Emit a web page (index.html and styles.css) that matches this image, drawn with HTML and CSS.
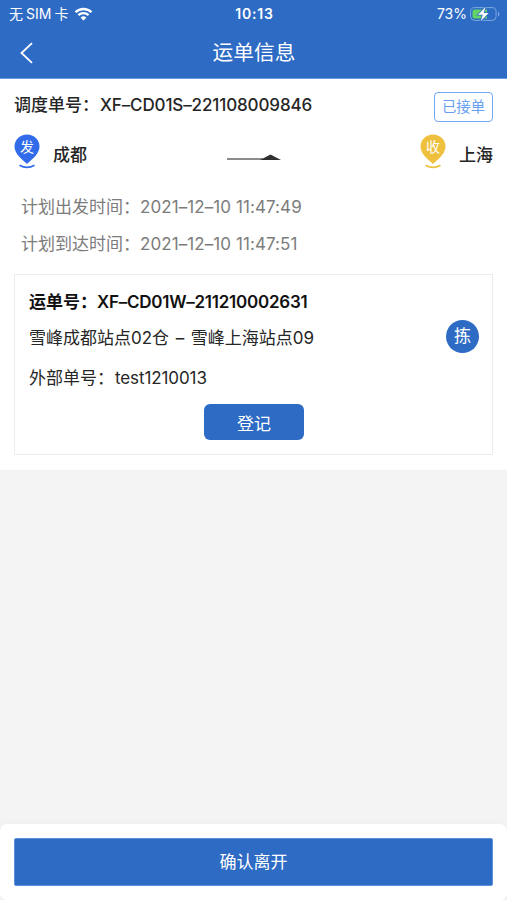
FILE: index.html
```html
<!DOCTYPE html>
<html lang="zh-CN">
<head>
  <meta charset="UTF-8">
  <meta name="viewport" content="width=device-width, initial-scale=1.0">
  <title>运单信息</title>
  <link rel="stylesheet" href="styles.css">
</head>
<body>
  <header class="header">
    <div class="status-bar">
      <div class="status-left">
        <span class="carrier">无<span class="sim">SIM</span>卡</span>
        <svg class="wifi" width="19" height="14" viewBox="0 0 19 14">
          <path d="M1.5 5.2a11.6 11.6 0 0 1 16 0M4.4 8.2a7.4 7.4 0 0 1 10.2 0" fill="none" stroke="#fff" stroke-width="2.3"/>
          <path d="M9.5 13.6 6.6 10.7a4.2 4.2 0 0 1 5.8 0z" fill="#fff"/>
        </svg>
      </div>
      <div class="status-time">10:13</div>
      <div class="status-right">
        <span>73%</span>
        <svg class="battery" width="30" height="16" viewBox="0 0 30 16">
          <rect x="0.6" y="1.6" width="25.5" height="12.8" rx="4" fill="none" stroke="#7fa8df"/>
          <path d="M4.5 3.5H17v9H4.5a2 2 0 0 1-2-2v-5a2 2 0 0 1 2-2z" fill="#65d466"/>
          <path d="M28 5.7a2.5 2.5 0 0 1 0 4.6z" fill="#7fa8df"/>
          <path d="M15.7.8 8 8.8h4.8L10.600 15.2 18.6 7h-5z" fill="#fff" stroke="#2d6bc4" stroke-width="1.6" paint-order="stroke"/>
        </svg>
      </div>
    </div>
    <div class="nav-bar">
      <svg class="back" width="14" height="22" viewBox="0 0 14 22">
        <path d="M12 1.200 1.500 11 12 20.800" fill="none" stroke="#fff" stroke-width="1.800"/>
      </svg>
      <h1 class="title">运单信息</h1>
    </div>
  </header>

  <main class="order">
    <div class="order-head">
      <div class="order-no">调度单号：<span class="code">XF–CD01S–221108009846</span></div>
      <div class="state">已接单</div>
    </div>

    <div class="route">
      <div class="place">
        <svg class="pin" width="26" height="35" viewBox="0 0 26 35">
          <path d="M13 .5C6 .5.5 5.800.5 12.500c0 7.500 8 13 12.500 17.500 4.500-4.500 12.500-10 12.500-17.500C25.500 5.800 20 .5 13 .5z" fill="#316bea"/>
          <path d="M5.500 31.300q7.500 4.200 15 0" fill="none" stroke="#316bea" stroke-width="1.600"/>
          <text class="pin-text" x="13" y="17.500">发</text>
        </svg>
        <span>成都</span>
      </div>
      <svg class="arrow" width="54" height="8" viewBox="0 0 54 8">
        <path d="M0 6h36" stroke="#666" stroke-width="1.400"/>
        <path d="M33 6.900 43.500 1.500 54 6.900z" fill="#303030"/>
      </svg>
      <div class="place">
        <svg class="pin" width="26" height="35" viewBox="0 0 26 35">
          <path d="M13 .5C6 .5.5 5.800.5 12.500c0 7.500 8 13 12.500 17.500 4.500-4.500 12.500-10 12.500-17.500C25.500 5.800 20 .5 13 .5z" fill="#eec03e"/>
          <path d="M5.500 31.300q7.500 4.200 15 0" fill="none" stroke="#eec03e" stroke-width="1.600"/>
          <text class="pin-text" x="13" y="17.500">收</text>
        </svg>
        <span>上海</span>
      </div>
    </div>

    <div class="plan">
      <p>计划出发时间：<span class="time">2021–12–10 11:47:49</span></p>
      <p>计划到达时间：<span class="time">2021–12–10 11:47:51</span></p>
    </div>

    <section class="waybill">
      <p class="waybill-no">运单号：<span class="waybill-code">XF–CD01W–211210002631</span></p>
      <div class="waybill-route">
        <span class="stations">雪峰成都站点02仓 – 雪峰上海站点09</span>
        <span class="pick">拣</span>
      </div>
      <p class="outer-no">外部单号：<span class="outer-code">test1210013</span></p>
      <button class="register" type="button">登记</button>
    </section>
  </main>

  <footer class="footer">
    <button class="confirm" type="button">确认离开</button>
  </footer>
</body>
</html>
```

FILE: styles.css
```css
* {
  box-sizing: border-box;
}

body {
  margin: 0;
  height: 100vh;
  display: flex;
  flex-direction: column;
  background-color: #f4f4f4;
  font-family: Inter, "Noto Sans CJK SC", sans-serif;
  font-size: 17px;
  color: #262626;
}

p {
  margin: 0;
}

button {
  border: none;
  padding: 0;
  color: #fff;
  background-color: #2d6bc4;
  font-family: inherit;
  font-size: 17px;
}

.header {
  height: 79px;
  color: #fff;
  background-color: #2d6bc4;
  border-bottom: 1px solid #6b9be0;
}

.status-bar {
  display: grid;
  grid-template-columns: 1fr auto 1fr;
  align-items: center;
  height: 27px;
  padding: 0 7px 0 9px;
  font-size: 14px;
}

.status-left,
.status-right {
  display: flex;
  align-items: center;
}

.carrier {
  margin-top: -2px;
}

.status-left {
  gap: 6px;
}

.status-right {
  justify-content: flex-end;
  gap: 3px;
}

.sim {
  margin: 0 3px;
}

.status-time {
  font-weight: 600;
  letter-spacing: 0.8px;
}

.nav-bar {
  display: grid;
  grid-template-columns: 1fr auto 1fr;
  align-items: center;
  height: 51px;
  padding: 0 19px 0 20px;
}

.title {
  margin: -4px 0 0;
  font-size: 20.700px;
  font-weight: 400;
}

.order {
  height: 391px;
  padding: 13px 14px 0;
  background-color: #fff;
}

.order-head {
  display: flex;
  justify-content: space-between;
  height: 42px;
}

.order-no {
  line-height: 26px;
  font-weight: 500;
}

.code {
  margin-left: 1px;
  letter-spacing: -0.12px;
}

.state {
  width: 59px;
  height: 30px;
  border: 1px solid #74a7f5;
  border-radius: 4px;
  line-height: 28px;
  text-align: center;
  font-size: 14.400px;
  color: #68a0f2;
}

.route {
  display: flex;
  justify-content: space-between;
  align-items: center;
  height: 35px;
}

.place {
  display: flex;
  align-items: center;
  gap: 13px;
  font-weight: 500;
}

.place span {
  padding-top: 4px;
}

.pin-text {
  fill: #fff;
  font-size: 14px;
  font-weight: 400;
  text-anchor: middle;
}

.arrow {
  margin-top: 10px;
}

.plan {
  padding: 20px 7px 0;
  line-height: 37px;
  color: #7c7c7c;
}

.time {
  letter-spacing: 0.08px;
}

.waybill {
  display: flex;
  flex-direction: column;
  height: 181px;
  margin-top: 11px;
  padding: 14px 13px 0 14px;
  border: 1px solid #ececec;
}

.waybill-no {
  line-height: 26px;
  font-weight: 600;
  color: #111;
}

.waybill-code {
  letter-spacing: -0.25px;
}

.waybill-route {
  display: flex;
  justify-content: space-between;
  align-items: center;
  height: 43px;
}

.stations {
  margin-top: -1px;
  word-spacing: 1.800px;
}

.pick {
  width: 33px;
  height: 33px;
  border-radius: 50%;
  line-height: 33px;
  text-align: center;
  color: #fff;
  background-color: #2d6bc4;
}

.outer-no {
  line-height: 41px;
}

.outer-code {
  margin-left: 1px;
  letter-spacing: -0.1px;
}

.register {
  align-self: center;
  width: 100px;
  height: 36px;
  margin-top: 5px;
  border-radius: 6px;
}

.footer {
  height: 76px;
  margin-top: auto;
  padding: 14px;
  border-radius: 7px;
  background-color: #fff;
  box-shadow: 0 -1px 8px rgba(0, 0, 0, 0.03);
}

.confirm {
  display: block;
  width: 100%;
  height: 48px;
  padding-bottom: 3px;
  border: 1px solid #5a90dc;
  border-radius: 2px;
}
```
